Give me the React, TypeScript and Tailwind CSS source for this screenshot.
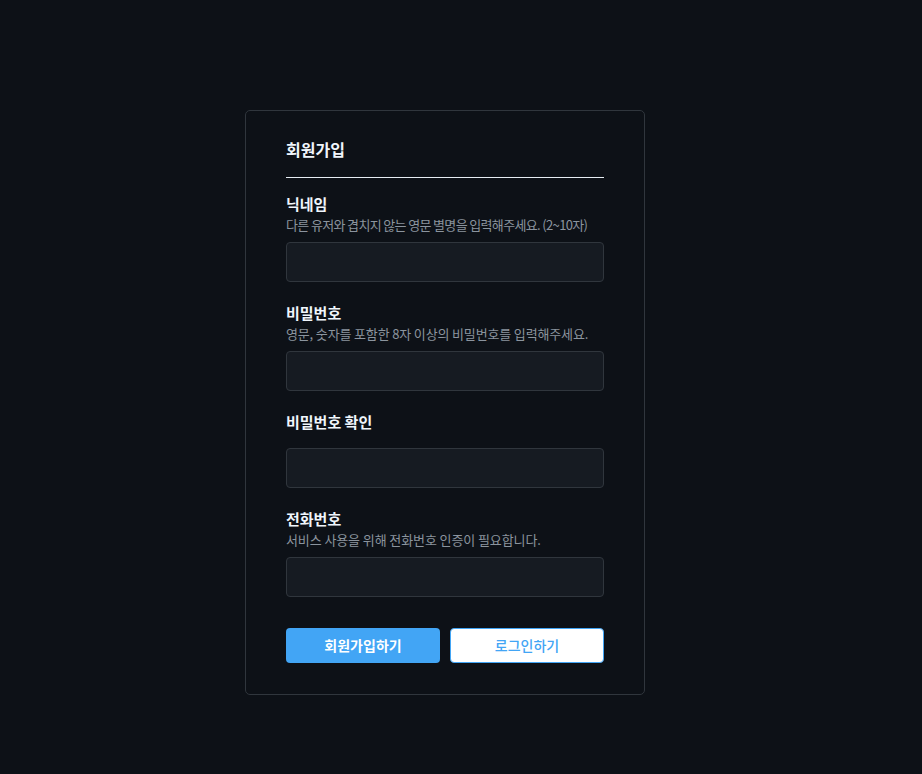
import React from "react";

const FONT = "font-['Noto_Sans_CJK_KR','Noto_Sans',sans-serif]";

interface FieldProps {
  label: string;
  hint?: string;
  hintClass?: string;
  type?: string;
}

function Field({ label, hint, hintClass = "", type = "text" }: Readonly<FieldProps>) {
  return (
    <div className="flex flex-col">
      <label className="text-[15px] leading-[22px] font-bold text-[#f0f6fc]">{label}</label>
      {hint ? (
        <p className={`text-[13px] leading-[20px] whitespace-nowrap text-[#8b949e] ${hintClass}`}>{hint}</p>
      ) : null}
      <input
        type={type}
        className={`h-10 w-full rounded-[4px] border border-[#30363d] bg-[#161b22] px-3 text-sm text-white outline-none ${
          hint ? "mt-[7px]" : "mt-[15px]"
        }`}
      />
    </div>
  );
}

export default function App() {
  return (
    <div className={`min-h-screen bg-[#0d1117] ${FONT}`}>
      <div className="flex justify-center pr-8 pt-[110px] pb-20">
        <div className="w-[400px] rounded-[5px] border border-[#30363d] bg-[#0d1117] px-10 pt-[26px] pb-[31px]">
          <h1 className="border-b border-[#e6edf3] pb-4 text-[16px] leading-[24px] font-bold text-[#f0f6fc]">
            회원가입
          </h1>

          <div className="mt-[15px] flex flex-col gap-5">
            <Field
              label="닉네임"
              hint="다른 유저와 겹치지 않는 영문 별명을 입력해주세요. (2~10자)"
              hintClass="tracking-[-0.65px]"
            />
            <Field
              label="비밀번호"
              type="password"
              hint="영문, 숫자를 포함한 8자 이상의 비밀번호를 입력해주세요."
              hintClass="tracking-[-0.15px]"
            />
            <Field label="비밀번호 확인" type="password" />
            <Field
              label="전화번호"
              hint="서비스 사용을 위해 전화번호 인증이 필요합니다."
              hintClass="tracking-[-0.1px]"
            />
          </div>

          <div className="mt-[31px] grid grid-cols-2 gap-[10px]">
            <button className="h-[35px] rounded-[4px] bg-[#42a5f5] text-[14px] font-bold text-white">
              회원가입하기
            </button>
            <button className="h-[35px] rounded-[4px] border border-[#42a5f5] bg-white text-[14px] font-medium text-[#42a5f5]">
              로그인하기
            </button>
          </div>
        </div>
      </div>
    </div>
  );
}
